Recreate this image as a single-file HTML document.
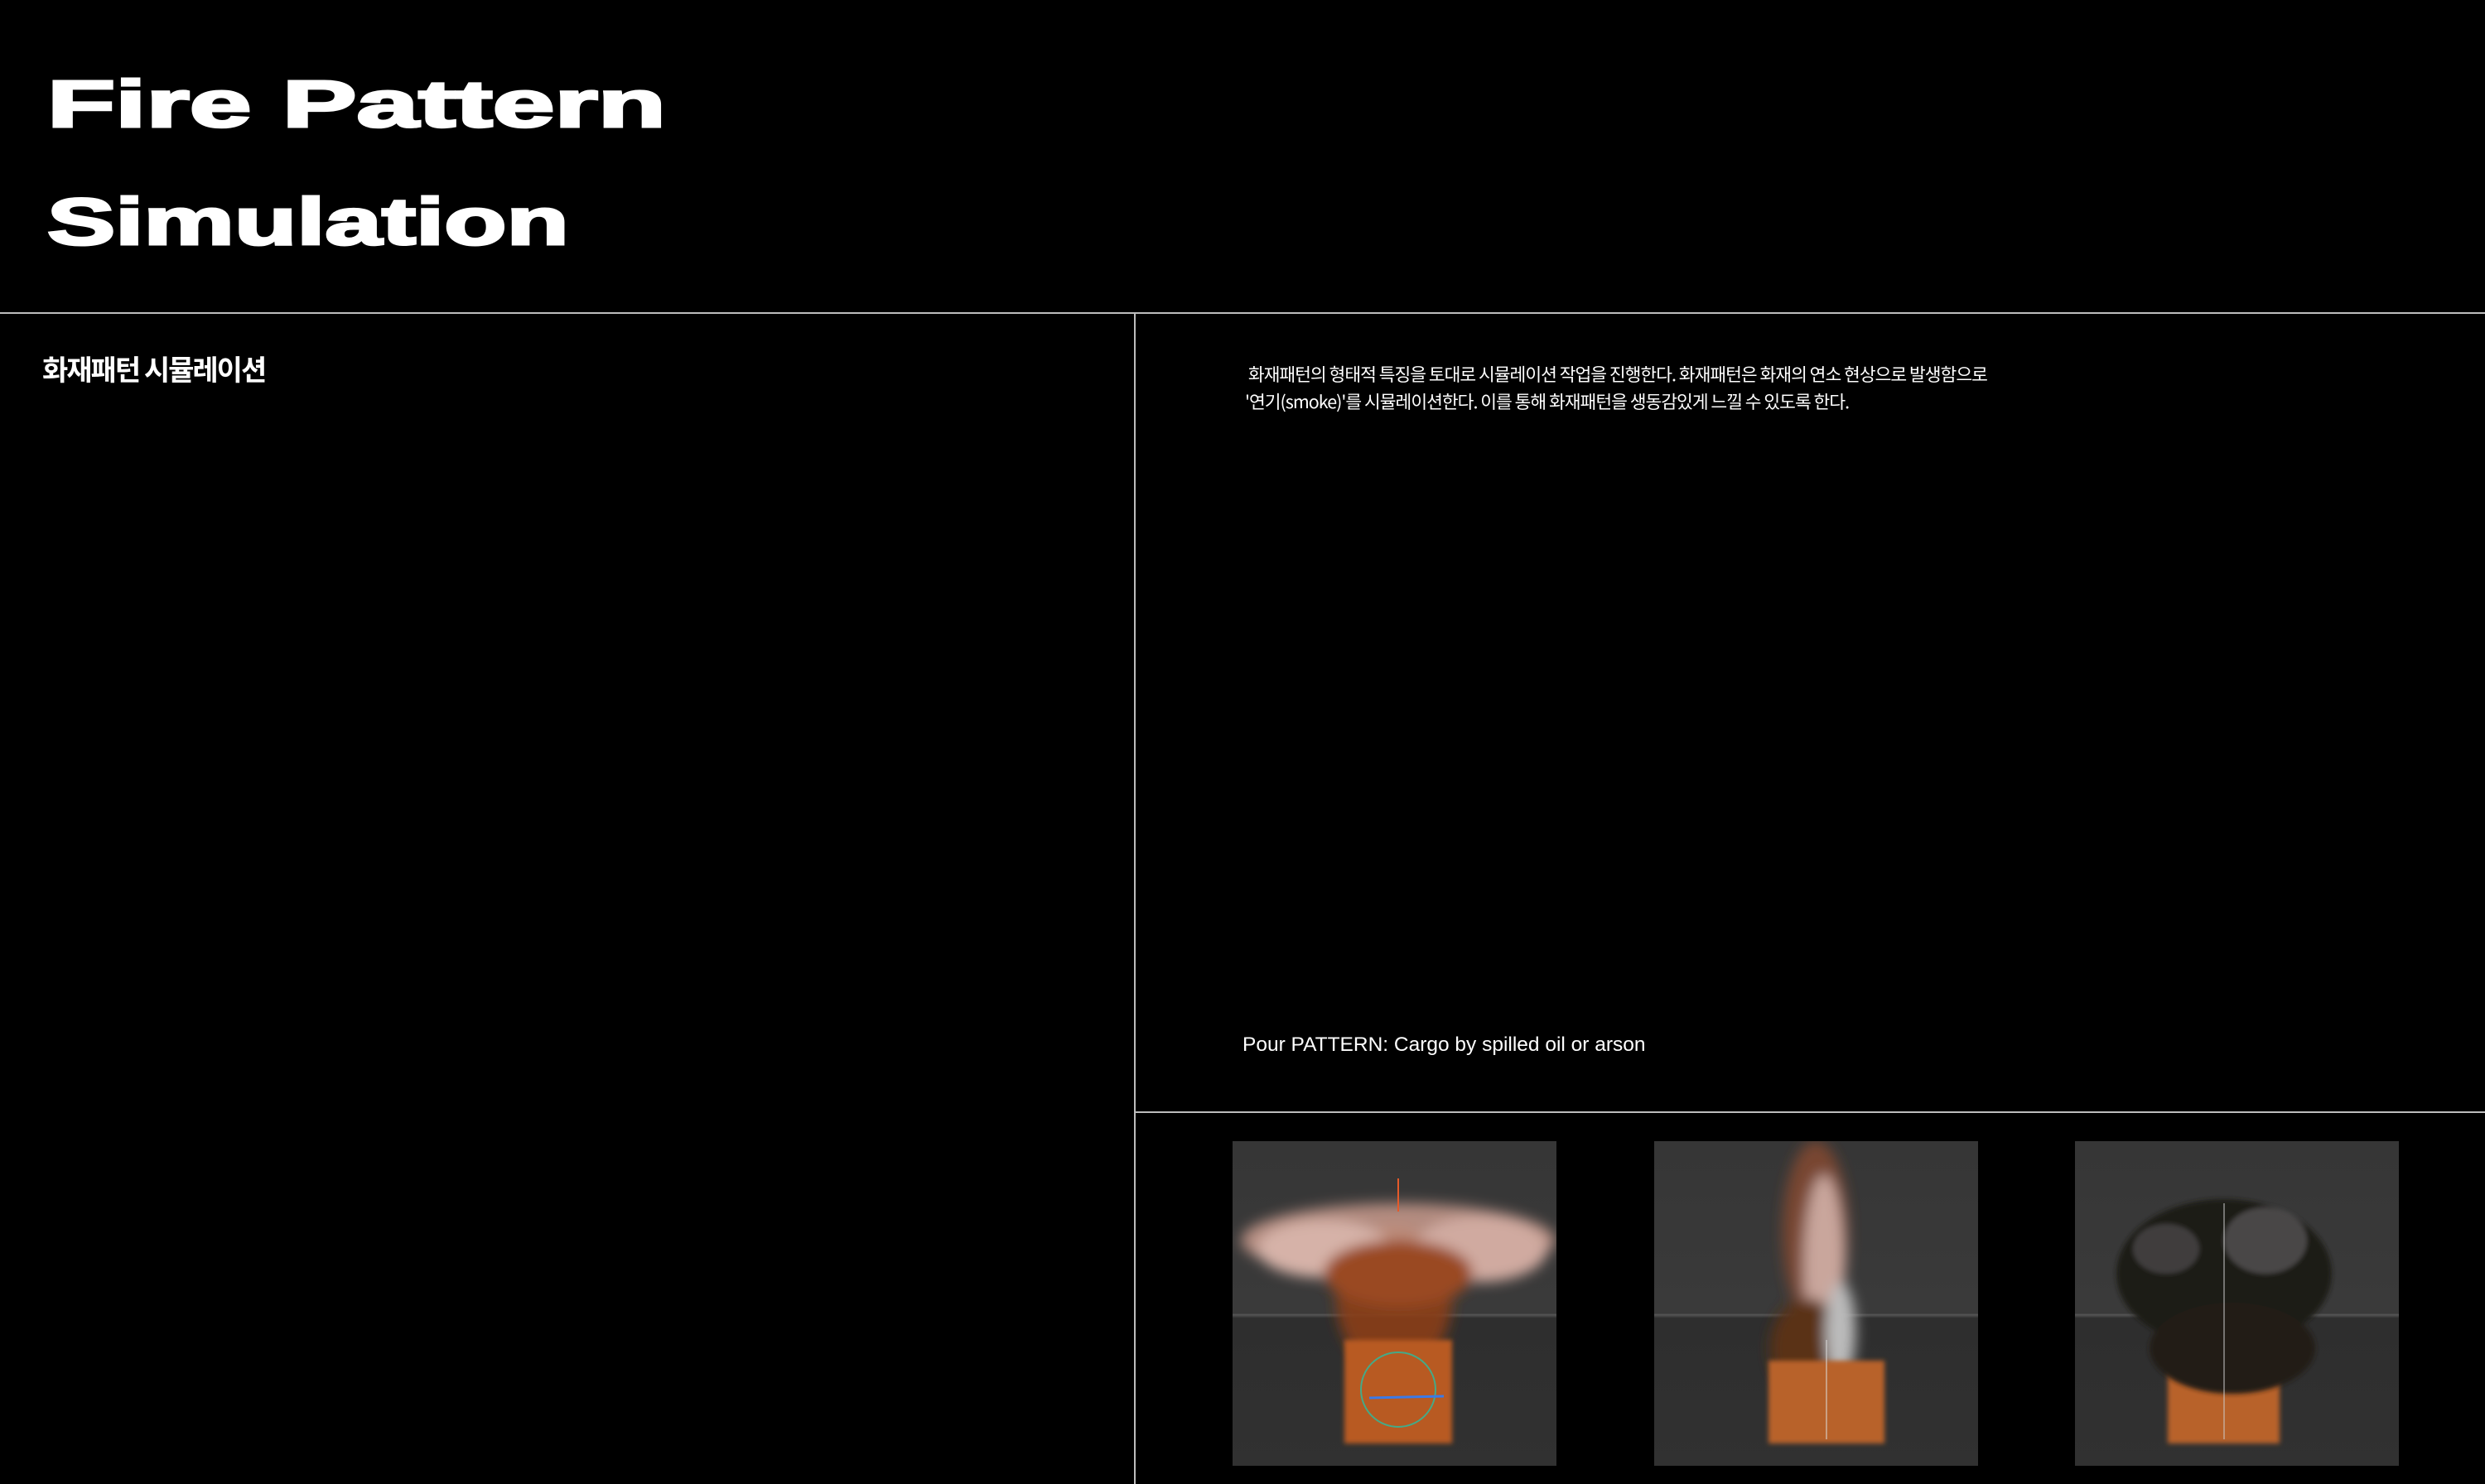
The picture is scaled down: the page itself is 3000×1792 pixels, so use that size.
<!DOCTYPE html>
<html><head><meta charset="utf-8"><style>
html,body{margin:0;padding:0;background:#000;}
body{width:3000px;height:1792px;position:relative;overflow:hidden;font-family:"Liberation Sans","Noto Sans CJK KR",sans-serif;color:#fff;}
.t{position:absolute;left:57px;font-weight:bold;font-size:80px;line-height:1;white-space:nowrap;transform-origin:0 0;letter-spacing:0px;-webkit-text-stroke:3px #fff;}
.ln{position:absolute;background:#bdbdbd;}
.kr{font-family:"Noto Sans CJK KR","NanumGothic",sans-serif;}
.img{position:absolute;top:1378px;width:391px;height:392px;}
</style></head><body>
<div class="t" style="top:86px;transform:scaleX(1.68)">Fire Pattern</div>
<div class="t" style="top:228px;transform:scaleX(1.54)">Simulation</div>
<div class="ln" style="left:0;top:377px;width:3000px;height:2px"></div>
<div class="ln" style="left:1369px;top:377px;width:2px;height:1415px"></div>
<div class="ln" style="left:1370px;top:1342px;width:1630px;height:2px"></div>
<div class="kr" style="position:absolute;left:51px;top:420px;font-size:34px;font-weight:bold;letter-spacing:-2px;white-space:nowrap">화재패턴 시뮬레이션</div>
<div class="kr" style="position:absolute;left:1503px;top:435px;font-size:21.5px;line-height:33px;letter-spacing:-1px;white-space:nowrap">&nbsp;화재패턴의 형태적 특징을 토대로 시뮬레이션 작업을 진행한다. 화재패턴은 화재의 연소 현상으로 발생함으로<br>'연기(smoke)'를 시뮬레이션한다. 이를 통해 화재패턴을 생동감있게 느낄 수 있도록 한다.</div>
<div style="position:absolute;left:1500px;top:1248px;font-size:24.5px;white-space:nowrap">Pour PATTERN: Cargo by spilled oil or arson</div>

<svg width="0" height="0" style="position:absolute"><defs>
<filter id="b" x="-50%" y="-50%" width="200%" height="200%"><feGaussianBlur stdDeviation="8"/></filter>
<filter id="b2" x="-50%" y="-50%" width="200%" height="200%"><feGaussianBlur stdDeviation="3"/></filter>
<linearGradient id="bg" x1="0" y1="0" x2="0" y2="1"><stop offset="0" stop-color="#363636"/><stop offset="0.53" stop-color="#3a3a3a"/><stop offset="0.535" stop-color="#555"/><stop offset="0.545" stop-color="#2e2e2e"/><stop offset="1" stop-color="#313131"/></linearGradient>
</defs></svg>

<svg class="img" style="left:1488px" viewBox="0 0 391 392">
<rect width="391" height="392" fill="url(#bg)"/>
<g filter="url(#b)">
<ellipse cx="195" cy="190" rx="70" ry="90" fill="#8a3d18" opacity=".9"/>
<ellipse cx="200" cy="120" rx="190" ry="45" fill="#c89a8c" opacity=".85"/>
<ellipse cx="110" cy="130" rx="80" ry="35" fill="#d6b2a8"/>
<ellipse cx="300" cy="130" rx="80" ry="40" fill="#d0aaa0"/>
<ellipse cx="200" cy="160" rx="90" ry="40" fill="#9a4a22"/>
</g>
<rect x="135" y="240" width="130" height="125" fill="#b85a22" filter="url(#b2)"/>
<circle cx="200" cy="300" r="45" fill="none" stroke="#4a8" stroke-width="2"/>
<line x1="165" y1="310" x2="255" y2="308" stroke="#3a7ae8" stroke-width="3"/>
<line x1="200" y1="45" x2="200" y2="85" stroke="#e55a2a" stroke-width="2"/>
</svg>

<svg class="img" style="left:1997px" viewBox="0 0 391 392">
<rect width="391" height="392" fill="url(#bg)"/>
<g filter="url(#b)">
<ellipse cx="195" cy="110" rx="40" ry="110" fill="#8a4a30" opacity=".8"/>
<ellipse cx="205" cy="150" rx="25" ry="110" fill="#c9a69c"/>
<ellipse cx="185" cy="250" rx="45" ry="60" fill="#5a3018"/>
<ellipse cx="225" cy="230" rx="18" ry="60" fill="#bbb"/>
</g>
<rect x="138" y="265" width="140" height="100" fill="#b8622a" filter="url(#b2)"/>
<line x1="208" y1="240" x2="208" y2="360" stroke="#ddd" stroke-width="1"/>
</svg>

<svg class="img" style="left:2505px" viewBox="0 0 391 392">
<rect width="391" height="392" fill="url(#bg)"/>
<rect x="112" y="275" width="135" height="90" fill="#b8622a" filter="url(#b2)"/>
<g filter="url(#b2)">
<ellipse cx="180" cy="160" rx="130" ry="90" fill="#1e1a18"/>
<ellipse cx="190" cy="250" rx="100" ry="55" fill="#221a16"/>
<ellipse cx="230" cy="120" rx="50" ry="40" fill="#666" opacity=".6"/>
<ellipse cx="110" cy="130" rx="40" ry="30" fill="#555" opacity=".6"/>
</g>
<line x1="180" y1="75" x2="180" y2="360" stroke="#ccc" stroke-width="1"/>
</svg>
</body></html>
